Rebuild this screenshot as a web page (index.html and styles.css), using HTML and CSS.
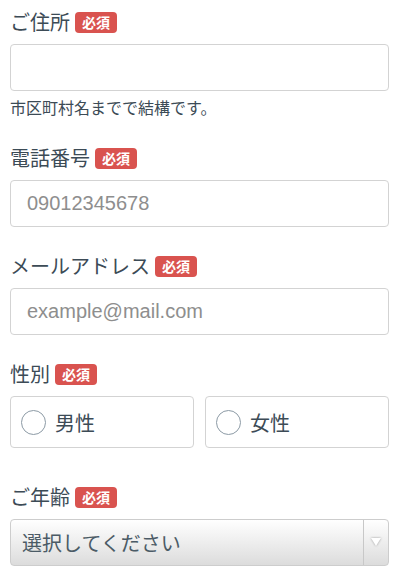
FILE: index.html
```html
<!DOCTYPE html>
<html lang="ja">
  <head>
    <meta charset="UTF-8" />
    <meta name="viewport" content="width=device-width, initial-scale=1.0" />
    <title>お客様情報</title>
    <link rel="stylesheet" href="styles.css">
  </head>
  <body>
    <form class="form">
      <div class="field">
        <label class="field-label" for="address">ご住所<span class="required">必須</span></label>
        <input class="text-input" id="address" type="text" />
        <p class="help">市区町村名までで結構です。</p>
      </div>

      <div class="field">
        <label class="field-label" for="tel">電話番号<span class="required">必須</span></label>
        <input class="text-input" id="tel" type="tel" placeholder="09012345678" />
      </div>

      <div class="field">
        <label class="field-label" for="mail">メールアドレス<span class="required">必須</span></label>
        <input class="text-input" id="mail" type="email" placeholder="example@mail.com" />
      </div>

      <div class="field field-gender">
        <div class="field-label">性別<span class="required">必須</span></div>
        <div class="radios">
          <label class="radio">
            <input type="radio" name="gender" value="male" />
            <span class="circle"></span>
            <span>男性</span>
          </label>
          <label class="radio">
            <input type="radio" name="gender" value="female" />
            <span class="circle"></span>
            <span>女性</span>
          </label>
        </div>
      </div>

      <div class="field">
        <label class="field-label" for="age">ご年齢<span class="required">必須</span></label>
        <div class="select">
          <select id="age">
            <option>選択してください</option>
            <option>10代</option>
            <option>20代</option>
            <option>30代</option>
            <option>40代</option>
            <option>50代以上</option>
          </select>
          <span class="select-arrow"></span>
        </div>
      </div>
    </form>
  </body>
</html>
```

FILE: styles.css
```css
body {
  margin: 0;
  padding: 11px 11px 0 10px;
  background-color: #fff;
  color: #3c4b56;
  font-family: "Liberation Sans", "Noto Sans CJK JP", sans-serif;
}

.field {
  margin-bottom: 28px;
}

.field:first-child {
  margin-bottom: 30px;
}

.field-gender {
  margin-bottom: 38px;
}

.field-label {
  display: flex;
  align-items: center;
  height: 22px;
  margin-bottom: 11px;
  font-family: "Noto Sans CJK JP", sans-serif;
  font-size: 20px;
  line-height: 22px;
}

.required {
  display: inline-block;
  margin-left: 5px;
  padding: 0 7px;
  height: 21px;
  line-height: 21px;
  background-color: #d9534f;
  color: #fff;
  font-size: 14px;
  font-weight: bold;
  border-radius: 4px;
}

.text-input {
  display: block;
  box-sizing: border-box;
  width: 100%;
  height: 47px;
  margin: 0;
  padding: 0 16px;
  border: 1px solid #d3d3d3;
  border-radius: 4px;
  font-family: "Liberation Sans", "Noto Sans CJK JP", sans-serif;
  font-size: 20px;
  color: #333;
  outline: none;
}

.text-input::placeholder {
  color: #8e8e8e;
}

.help {
  margin: 6px 0 0;
  font-family: "Noto Sans CJK JP", sans-serif;
  font-size: 16px;
  line-height: 20px;
}

.radios {
  display: grid;
  grid-template-columns: 1fr 1fr;
  gap: 11px;
}

.radio {
  display: flex;
  align-items: center;
  box-sizing: border-box;
  height: 52px;
  padding-left: 10px;
  border: 1px solid #d3d3d3;
  border-radius: 4px;
  font-family: "Noto Sans CJK JP", sans-serif;
  font-size: 20px;
  cursor: pointer;
}

.radio input {
  display: none;
}

.circle {
  box-sizing: border-box;
  width: 25px;
  height: 25px;
  margin-right: 9px;
  border: 1.5px solid #8c9aa5;
  border-radius: 50%;
}

.select {
  position: relative;
  height: 47px;
}

.select select {
  box-sizing: border-box;
  width: 100%;
  height: 47px;
  padding: 0 0 0 11px;
  border: 1px solid #cdcdcd;
  border-radius: 4px;
  background: linear-gradient(#ffffff, #dcdcdc);
  font-family: "Noto Sans CJK JP", sans-serif;
  font-size: 20px;
  color: #4b5b66;
  appearance: none;
  outline: none;
}

.select-arrow {
  position: absolute;
  top: 1px;
  right: 1px;
  bottom: 1px;
  width: 24px;
  border-left: 1px solid #c8c8c8;
  pointer-events: none;
}

.select-arrow::after {
  content: "";
  position: absolute;
  top: 18px;
  left: 7px;
  border-left: 5px solid transparent;
  border-right: 5px solid transparent;
  border-top: 8px solid #fff;
  filter: drop-shadow(0 0 1px #999);
}
```
